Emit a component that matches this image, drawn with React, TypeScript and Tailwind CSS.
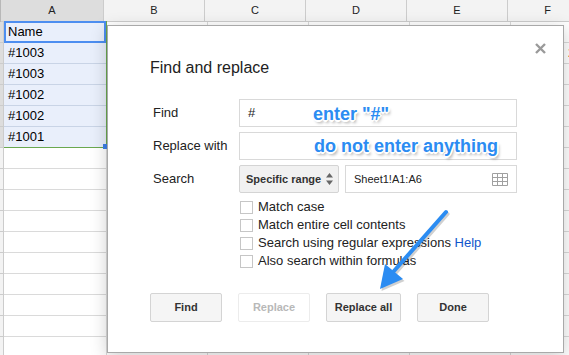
import React from "react";

const cols = [
  { l: "A", w: "w-[103px]" },
  { l: "B", w: "w-[101px]" },
  { l: "C", w: "w-[101px]" },
  { l: "D", w: "w-[101px]" },
  { l: "E", w: "w-[101px]" },
  { l: "F", w: "w-[80px]" },
];

const values = ["Name", "#1003", "#1003", "#1002", "#1002", "#1001"];

function Checkbox({ label, help }: { label: string; help?: boolean }) {
  return (
    <div className="flex h-[18px] items-center">
      <div className="h-[13px] w-[13px] border border-[#c6c6c6] bg-white" />
      <span className="ml-[5px] text-[13px] leading-[16px] text-[#222]">
        {label}
        {help && <span className="text-[#1155cc]"> Help</span>}
      </span>
    </div>
  );
}

function Btn({ label, w, disabled }: { label: string; w: string; disabled?: boolean }) {
  return (
    <div
      className={`${w} flex h-[29px] items-center justify-center rounded-[2px] border text-[11px] font-bold ${
        disabled
          ? "border-[#ececec] bg-white text-[#b8b8b8]"
          : "border-[#d4d4d4] bg-[#f5f5f5] text-[#333]"
      }`}
    >
      {label}
    </div>
  );
}

export default function App() {
  const rows = Array.from({ length: 16 }, (_, i) => i);
  return (
    <div className="relative h-[355px] w-[569px] overflow-hidden bg-white font-['Liberation_Sans',Arial,sans-serif]">
      {/* Column header */}
      <div className="flex h-[22px]">
        <div className="h-[22px] w-[4px] border-b border-r border-[#b8b8b8] bg-[#c8c8c8]" />
        {cols.map((c) => (
          <div
            key={c.l}
            className={`${c.w} flex h-[22px] shrink-0 items-center justify-center border-b border-r border-[#cccccc] text-[11px] text-[#222] ${
              c.l === "A" ? "bg-[#dddddd]" : "bg-[#f3f3f3]"
            }`}
          >
            {c.l}
          </div>
        ))}
      </div>
      {/* Rows */}
      {rows.map((r) => (
        <div key={r} className="flex h-[21px]">
          <div
            className={`h-[21px] w-[4px] shrink-0 border-b border-r border-[#cccccc] ${
              r < 6 ? "bg-[#dddddd]" : "bg-[#f3f3f3]"
            }`}
          />
          {cols.map((c) => (
            <div
              key={c.l}
              className={`${c.w} flex h-[21px] shrink-0 items-center border-b border-r pl-[4px] text-[13px] text-black ${
                c.l === "A" && r < 6 ? "border-[#c9d4e6] bg-[#e9effb]" : "border-[#dadada] bg-white"
              }`}
            >
              {c.l === "A" && r < 6 ? values[r] : ""}
              {c.l === "F" && r === 1 ? <span className="ml-[53px] text-[#7a2a10]">2</span> : null}
            </div>
          ))}
        </div>
      ))}

      {/* Selection overlay */}
      <div className="pointer-events-none absolute left-[4px] top-[21px] h-[127px] w-[103px] border-b border-r border-[#6aa84f]" />
      <div className="pointer-events-none absolute left-[4px] top-[21px] h-[22px] w-[102px] border-2 border-[#4d8ef0]" />
      <div className="pointer-events-none absolute left-[103px] top-[144px] h-[5px] w-[5px] bg-[#3d7fe8]" />

      {/* Dialog */}
      <div className="absolute left-[107px] top-[25px] h-[328px] w-[457px] border border-[#a9a9a9] bg-white pl-[42px] pt-[32px] shadow-[0_4px_16px_rgba(0,0,0,0.2)]">
        <svg className="absolute left-[427px] top-[17px]" width="11" height="11" viewBox="0 0 11 11">
          <path d="M1 1 L10 10 M10 1 L1 10" stroke="#9a9a9a" strokeWidth="2.4" />
        </svg>
        <div className="h-[20px] text-[16px] leading-[20px] text-[#222]">Find and replace</div>
        <div className="mt-[21px] flex flex-col gap-[5px]">
          <div className="flex h-[28px] items-center">
            <div className="w-[89px] pl-[3px] text-[13px] text-[#222]">Find</div>
            <div className="flex h-[28px] w-[278px] items-center border border-[#d9d9d9] pl-[8px] text-[13px] text-[#222]">
              #
            </div>
          </div>
          <div className="flex h-[28px] items-center">
            <div className="w-[89px] pl-[3px] text-[13px] text-[#222]">Replace with</div>
            <div className="h-[28px] w-[278px] border border-[#d9d9d9]" />
          </div>
          <div className="flex h-[28px] items-center">
            <div className="w-[89px] pl-[3px] text-[13px] text-[#222]">Search</div>
            <div className="flex h-[28px] w-[100px] items-center justify-between rounded-[2px] border border-[#d4d4d4] bg-[#f1f1f1] pl-[6px] pr-[5px] text-[11px] font-bold text-[#333]">
              <span>Specific range</span>
              <svg width="7" height="12" viewBox="0 0 7 12">
                <path d="M3.5 0 L7 4.5 L0 4.5 Z M3.5 12 L7 7.5 L0 7.5 Z" fill="#666" />
              </svg>
            </div>
            <div className="ml-[6px] flex h-[28px] w-[172px] items-center justify-between border border-[#d9d9d9] pl-[8px] pr-[8px] text-[11px] text-[#222]">
              <span>Sheet1!A1:A6</span>
              <svg width="16" height="13" viewBox="0 0 16 13">
                <path
                  d="M0.5 0.5 H15.5 V12.5 H0.5 Z M0.5 4.5 H15.5 M0.5 8.5 H15.5 M5.5 0.5 V12.5 M10.5 0.5 V12.5"
                  stroke="#a0a0a0"
                  fill="none"
                  strokeWidth="1"
                />
              </svg>
            </div>
          </div>
        </div>
        <div className="ml-[90px] mt-[5px] flex flex-col">
          <Checkbox label="Match case" />
          <Checkbox label="Match entire cell contents" />
          <Checkbox label="Search using regular expressions" help />
          <Checkbox label="Also search within formulas" />
        </div>
        <div className="mt-[23px] flex gap-[16px]">
          <Btn label="Find" w="w-[72px]" />
          <Btn label="Replace" w="w-[72px]" disabled />
          <Btn label="Replace all" w="w-[75px]" />
          <Btn label="Done" w="w-[72px]" />
        </div>
      </div>

      {/* Annotations */}
      <div className="absolute left-[313px] top-[104px] text-[18px] font-bold leading-[20px] text-[#2b8cf2] [text-shadow:1px_1px_0_#fff,-1px_-1px_0_#fff,1px_-1px_0_#fff,-1px_1px_0_#fff,0_2px_0_#fff,2px_0_0_#fff,2px_3px_3px_rgba(0,0,0,0.35)]">
        enter "#"
      </div>
      <div className="absolute left-[314px] top-[136px] text-[18px] font-bold leading-[20px] text-[#2b8cf2] [text-shadow:1px_1px_0_#fff,-1px_-1px_0_#fff,1px_-1px_0_#fff,-1px_1px_0_#fff,0_2px_0_#fff,2px_0_0_#fff,2px_3px_3px_rgba(0,0,0,0.35)]">
        do not enter anything
      </div>

      <svg className="pointer-events-none absolute left-0 top-0" width="569" height="355" viewBox="0 0 569 355">
        <g opacity="0.18" transform="translate(1.5,2)">
          <path d="M446 212 L394 271" stroke="#000" strokeWidth="4" strokeLinecap="round" />
          <path d="M380 289 L385 264 L403 279 Z" fill="#000" />
        </g>
        <path d="M446 212 L394 271" stroke="#2b8cf2" strokeWidth="4" strokeLinecap="round" />
        <path d="M380 289 L385 264 L403 279 Z" fill="#2b8cf2" />
      </svg>
    </div>
  );
}
